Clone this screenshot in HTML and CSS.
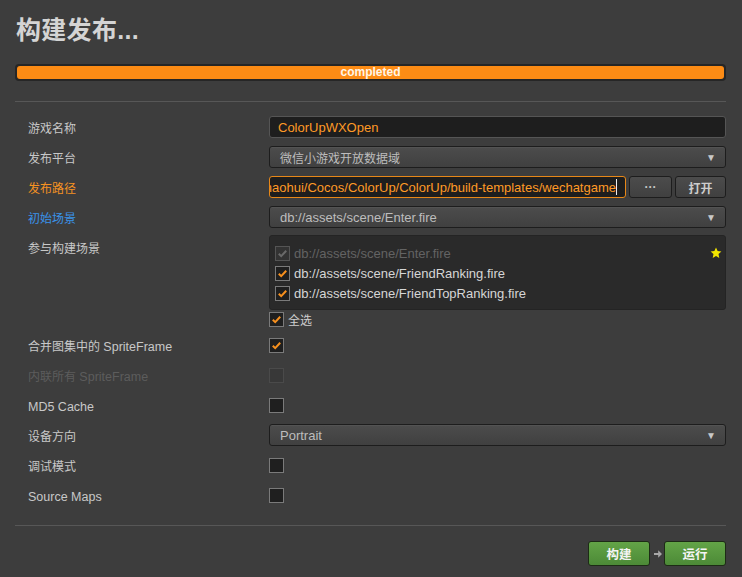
FILE: index.html
```html
<!DOCTYPE html>
<html lang="zh">
<head>
<meta charset="utf-8">
<title>构建发布</title>
<link rel="stylesheet" href="styles.css">
</head>
<body>
<div class="panel">
  <h1 class="title">构建发布...</h1>
  <div class="progress"><div class="progress-fill">completed</div></div>
  <div class="sep"></div>

  <div class="form">
    <div class="row">
      <div class="label">游戏名称</div>
      <div class="ctrl"><div class="input"><span class="orange lat">ColorUpWXOpen</span></div></div>
    </div>
    <div class="row">
      <div class="label">发布平台</div>
      <div class="ctrl"><div class="select"><span>微信小游戏开放数据域</span><span class="caret">▼</span></div></div>
    </div>
    <div class="row">
      <div class="label orange">发布路径</div>
      <div class="ctrl path-ctrl">
        <div class="input path"><span class="path-text orange lat">/Users/zhaohui/Cocos/ColorUp/ColorUp/build-templates/wechatgame</span><span class="text-caret"></span></div>
        <div class="btn dots">···</div>
        <div class="btn open">打开</div>
      </div>
    </div>
    <div class="row">
      <div class="label blue">初始场景</div>
      <div class="ctrl"><div class="select"><span class="lat">db://assets/scene/Enter.fire</span><span class="caret">▼</span></div></div>
    </div>
    <div class="row row-list">
      <div class="label">参与构建场景</div>
      <div class="ctrl list-ctrl">
        <div class="scene-list">
          <div class="item disabled"><span class="cb cb-disabled-on"><svg viewBox="0 0 14 14"><path d="M3 7.2l2.6 2.6L11 4" fill="none" stroke="#6a6a6a" stroke-width="2.2"/></svg></span><span class="lat">db://assets/scene/Enter.fire</span><svg class="star" viewBox="0 0 12 12"><path d="M6 0.6l1.6 3.5 3.8.4-2.9 2.6.8 3.8L6 9 2.7 10.9l.8-3.8L.6 4.5l3.8-.4z" fill="#f2e500"/></svg></div>
          <div class="item"><span class="cb on"><svg viewBox="0 0 14 14"><path d="M3 7.2l2.6 2.6L11 4" fill="none" stroke="#f7901e" stroke-width="2.2"/></svg></span><span class="lat">db://assets/scene/FriendRanking.fire</span></div>
          <div class="item"><span class="cb on"><svg viewBox="0 0 14 14"><path d="M3 7.2l2.6 2.6L11 4" fill="none" stroke="#f7901e" stroke-width="2.2"/></svg></span><span class="lat">db://assets/scene/FriendTopRanking.fire</span></div>
        </div>
        <div class="select-all"><span class="cb on"><svg viewBox="0 0 14 14"><path d="M3 7.2l2.6 2.6L11 4" fill="none" stroke="#f7901e" stroke-width="2.2"/></svg></span><span>全选</span></div>
      </div>
    </div>
    <div class="row">
      <div class="label">合并图集中的 <span class="lat-s">SpriteFrame</span></div>
      <div class="ctrl"><span class="cb on"><svg viewBox="0 0 14 14"><path d="M3 7.2l2.6 2.6L11 4" fill="none" stroke="#f7901e" stroke-width="2.2"/></svg></span></div>
    </div>
    <div class="row">
      <div class="label dim">内联所有 <span class="lat-s">SpriteFrame</span></div>
      <div class="ctrl"><span class="cb cb-disabled"></span></div>
    </div>
    <div class="row">
      <div class="label label-en"><span class="lat-s">MD5 Cache</span></div>
      <div class="ctrl"><span class="cb"></span></div>
    </div>
    <div class="row">
      <div class="label">设备方向</div>
      <div class="ctrl"><div class="select"><span class="lat">Portrait</span><span class="caret">▼</span></div></div>
    </div>
    <div class="row">
      <div class="label">调试模式</div>
      <div class="ctrl"><span class="cb"></span></div>
    </div>
    <div class="row">
      <div class="label label-en"><span class="lat-s">Source Maps</span></div>
      <div class="ctrl"><span class="cb"></span></div>
    </div>
  </div>

  <div class="sep sep-bottom"></div>
  <div class="actions">
    <div class="gbtn">构建</div>
    <svg class="arrow" viewBox="0 0 8 10"><path d="M0 4h4.2V1.3L8 5 4.2 8.7V6H0z" fill="#a8a8a8"/></svg>
    <div class="gbtn">运行</div>
  </div>
</div>
</body>
</html>
```

FILE: styles.css
```css
html, body {
  margin: 0;
  padding: 0;
  background: #3d3d3d;
}
body {
  font-family: "Liberation Sans", "Noto Sans CJK SC", sans-serif;
  font-size: 12px;
  color: #c6c6c6;
  width: 742px;
  height: 577px;
  overflow: hidden;
}
.lat { font-size: 13px; }
.lat-s { font-size: 12.5px; }
.panel {
  padding: 0 16px 0 15px;
}
.title {
  margin: 0;
  padding: 14px 0 0 1px;
  height: 36px;
  line-height: 32px;
  font-size: 25px;
  font-weight: bold;
  color: #d4d4d4;
  letter-spacing: 0.3px;
}
.progress {
  margin-top: 14px;
  height: 13px;
  border: 2px solid #262626;
  border-radius: 4px;
  background: #262626;
  box-sizing: content-box;
}
.progress-fill {
  height: 13px;
  border-radius: 3px;
  background: #fd8c15;
  color: #fff6e8;
  font-weight: bold;
  font-size: 12px;
  line-height: 13px;
  text-align: center;
}
.sep {
  margin-top: 20px;
  height: 1px;
  background: #575757;
}
.form {
  padding-top: 10px;
}
.row {
  display: flex;
  align-items: center;
  height: 30px;
}
.label {
  width: 241px;
  padding-left: 13px;
  flex: none;
  color: #c8c8c8;
  white-space: nowrap;
}
.label-en {
  padding-top: 4px;
}
.orange { color: #ff9a26; }
.label.orange { color: #f59222; }
.blue { color: #3a93ea; }
.dim { color: #5c5c5c; }
.ctrl {
  flex: 1;
  display: flex;
  align-items: center;
  min-width: 0;
}
.input {
  flex: 1;
  height: 20px;
  border: 1px solid #555;
  border-radius: 3px;
  background: #1e1e1e;
  display: flex;
  align-items: center;
  padding: 0 8px;
  min-width: 0;
  overflow: hidden;
  white-space: nowrap;
}
.path {
  border-color: #e68718;
  justify-content: flex-end;
  padding: 0 8px 0 0;
}
.path-text { flex: none; }
.text-caret {
  flex: none;
  width: 1px;
  height: 16px;
  background: #eee;
}
.select {
  flex: 1;
  height: 20px;
  border: 1px solid #1d1d1d;
  border-radius: 3px;
  background: linear-gradient(#4c4c4c, #404040);
  box-shadow: inset 0 1px 0 rgba(255,255,255,0.04);
  display: flex;
  align-items: center;
  justify-content: space-between;
  padding: 0 9px 0 10px;
  color: #bdbdbd;
}
.caret {
  font-size: 10px;
  color: #c8c8c8;
}
.btn {
  flex: none;
  height: 20px;
  border: 1px solid #1d1d1d;
  border-radius: 3px;
  background: linear-gradient(#4c4c4c, #404040);
  display: flex;
  align-items: center;
  justify-content: center;
  color: #c6c6c6;
  margin-left: 3px;
}
.dots { width: 41px; font-size: 12px; font-weight: bold; }
.open { width: 49px; font-size: 12px; font-weight: bold; color: #cdcdcd; }
.row-list {
  height: auto;
  align-items: flex-start;
  padding-top: 3px;
  padding-bottom: 3px;
}
.row-list .label {
  line-height: 28px;
}
.list-ctrl {
  flex-direction: column;
  align-items: stretch;
}
.scene-list {
  height: 66px;
  border: 1px solid #242424;
  border-radius: 3px;
  background: #2a2a2a;
  padding: 7px 0 0 5px;
}
.item {
  display: flex;
  align-items: center;
  height: 20px;
  color: #d6d6d6;
  position: relative;
}
.item .cb { margin-right: 4px; }
.item.disabled { color: #636363; }
.star {
  position: absolute;
  right: 3px;
  top: 4px;
  width: 12px;
  height: 12px;
}
.cb {
  flex: none;
  width: 13px;
  height: 13px;
  border: 1px solid #7a7a7a;
  background: #1f1f1f;
  display: inline-flex;
  align-items: center;
  justify-content: center;
}
.cb svg { width: 13px; height: 13px; display: block; }
.cb-disabled-on {
  border-color: #555;
  background: #333;
}
.cb-disabled {
  border-color: #4a4a4a;
  background: #383838;
}
.select-all {
  display: flex;
  align-items: center;
  margin-top: 2px;
  height: 15px;
  color: #cfcfcf;
}
.select-all .cb { margin-right: 4px; }
.sep-bottom {
  margin-top: 15px;
}
.actions {
  display: flex;
  justify-content: flex-end;
  align-items: center;
  margin-top: 15px;
}
.gbtn {
  width: 60px;
  height: 23px;
  border: 1px solid #1d2b16;
  border-radius: 3px;
  background: linear-gradient(#63a447, #4c8a37);
  color: #f4f4f4;
  font-weight: bold;
  font-size: 12.5px;
  display: flex;
  align-items: center;
  justify-content: center;
}
.arrow {
  width: 8px;
  height: 10px;
  margin: 0 2px 0 4px;
}
```
